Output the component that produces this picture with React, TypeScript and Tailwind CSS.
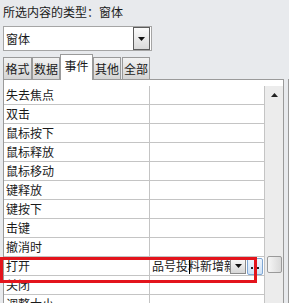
import React from "react";

const rows = [
  "失去焦点",
  "双击",
  "鼠标按下",
  "鼠标释放",
  "鼠标移动",
  "键释放",
  "键按下",
  "击键",
  "撤消时",
  "打开",
  "关闭",
  "调整大小",
];

function DownArrow({ w = 7, h = 4 }: { w?: number; h?: number }) {
  return (
    <svg width={w} height={h} viewBox={`0 0 ${w} ${h}`}>
      <polygon points={`0,0 ${w},0 ${w / 2},${h}`} fill="#111" />
    </svg>
  );
}

export default function App() {
  return (
    <div
      className="relative w-[289px] h-[303px] overflow-hidden bg-[#e8eaed] text-[12px] text-[#1a1a1a] flex flex-col"
      style={{ fontFamily: '"Noto Sans CJK SC", "Noto Sans", sans-serif' }}
    >
      {/* label */}
      <div className="h-[20px] pt-[4px] pl-[3px] leading-[16px] whitespace-nowrap">
        所选内容的类型：窗体
      </div>

      {/* combobox */}
      <div className="mt-[6px] ml-[3px] w-[149px] h-[27px] border border-[#a5a5a5] bg-white flex items-center">
        <span className="pl-[2px] leading-[16px]">窗体</span>
        <div className="ml-auto mr-[1px] w-[17px] h-[23px] border border-[#5c5c5c] bg-gradient-to-b from-[#fbfbfb] to-[#d9d9d9] flex items-center justify-center">
          <DownArrow />
        </div>
      </div>

      {/* tabs */}
      <div className="mt-[3px] h-[25px] flex items-end">
        <div className="ml-[3px] w-[29px] h-[22px] border-l border-t border-r border-[#9a9a9a] bg-gradient-to-b from-[#f2f2f2] to-[#d4d4d4] flex items-center justify-center leading-[14px]">
          格式
        </div>
        <div className="ml-[0px] w-[28px] h-[22px] border-l border-t border-r border-[#9a9a9a] bg-gradient-to-b from-[#f2f2f2] to-[#d4d4d4] flex items-center justify-center leading-[14px]">
          数据
        </div>
        <div className="relative z-10 w-[33px] h-[26px] -mb-[1px] border-l border-t border-r border-[#9a9a9a] bg-white flex items-start justify-center pt-[4px] leading-[14px]">
          事件
        </div>
        <div className="w-[28px] h-[22px] border-l border-t border-r border-[#9a9a9a] bg-gradient-to-b from-[#f2f2f2] to-[#d4d4d4] flex items-center justify-center leading-[14px]">
          其他
        </div>
        <div className="ml-[1px] w-[28px] h-[22px] border-l border-t border-r border-[#9a9a9a] bg-gradient-to-b from-[#f2f2f2] to-[#d4d4d4] flex items-center justify-center leading-[14px]">
          全部
        </div>
      </div>

      {/* panel */}
      <div className="flex-1 flex">
        <div className="ml-[3px] w-[281px] border-l border-t border-r border-[#9a9a9a] bg-white pt-[6px] flex items-start">
          <div className="w-[261px] border-r border-[#c4c4c4]">
            {rows.map((r) => (
              <div key={r} className="h-[19px] flex border-b border-[#c4c4c4]">
                <div className="w-[146px] border-r border-[#c4c4c4] pl-[2px] leading-[18px] whitespace-nowrap">
                  {r}
                </div>
                <div className="flex-1 flex items-center pl-[2px]">
                  {r === "打开" && (
                    <>
                      <div className="relative w-[78px] overflow-hidden whitespace-nowrap leading-[18px]">
                        品号投料新增新单
                        <span className="absolute left-[37px] top-[1px] w-[1px] h-[16px] bg-black" />
                      </div>
                      <div className="w-[16px] h-[15px] border border-[#8a8a8a] bg-gradient-to-b from-[#f7f7f7] to-[#d6d6d6] flex items-center justify-center">
                        <DownArrow w={7} h={4} />
                      </div>
                      <div className="ml-[1px] w-[16px] h-[17px] rounded-[2px] border border-[#7fa6d3] bg-gradient-to-b from-[#eef5fd] to-[#cfe2f7] flex items-end justify-center pb-[5px] gap-[1px]">
                        <span className="w-[2px] h-[2px] bg-[#222]" />
                        <span className="w-[2px] h-[2px] bg-[#222]" />
                        <span className="w-[2px] h-[2px] bg-[#222]" />
                      </div>
                    </>
                  )}
                </div>
              </div>
            ))}
          </div>
          {/* scrollbar */}
          <div className="w-[18px] self-stretch bg-[#ececec] flex flex-col items-center">
            <div className="h-[17px] w-full flex items-center justify-center pt-[1px]">
              <svg width="7" height="4" viewBox="0 0 7 4">
                <polygon points="0,4 7,4 3.5,0" fill="#222" />
              </svg>
            </div>
            <div className="mt-[153px] w-[15px] h-[17px] rounded-[2px] border border-[#9a9a9a] bg-gradient-to-r from-[#f6f6f6] to-[#d9d9d9]" />
          </div>
        </div>
        <div className="ml-[4px] w-[1px] bg-[#9a9a9a]" />
      </div>

      {/* red highlight */}
      <div className="absolute left-0 top-[257px] w-[257px] h-[26px] border-[3px] border-[#e3141c]" />
    </div>
  );
}
